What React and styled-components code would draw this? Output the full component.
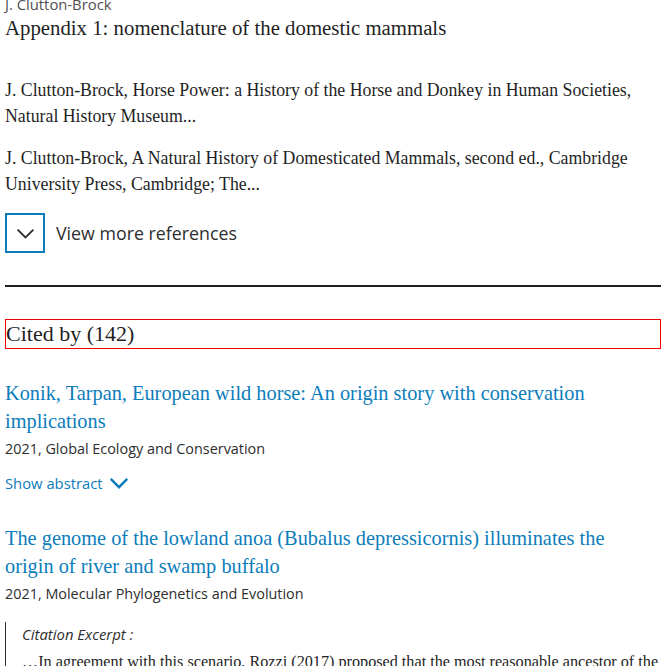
import React from 'react'
import styled, { createGlobalStyle } from 'styled-components'

const GlobalStyle = createGlobalStyle`
  body {
    margin: 0;
    background: #fff;
    overflow: hidden;
  }
`

const Page = styled.div`
  padding: 0 5px;
  margin-top: -6px;
  color: #2e2e2e;
`

const Author = styled.div`
  font-family: 'Open Sans', sans-serif;
  font-size: 14.8px;
  line-height: 20px;
  color: #505050;
`

const SourceTitle = styled.h3`
  font-family: 'Liberation Serif', serif;
  font-weight: normal;
  font-size: 20.8px;
  line-height: 28px;
  margin: 0 0 35px;
  color: #1f1f1f;
`

const RefList = styled.ul`
  list-style: none;
  margin: 0;
  padding: 0;
  display: flex;
  flex-direction: column;
  gap: 16px;
`

const RefItem = styled.li`
  font-family: 'Liberation Serif', serif;
  font-size: 17.8px;
  line-height: 26px;
  color: #1f1f1f;
`

const MoreRow = styled.div`
  display: flex;
  align-items: center;
  gap: 11px;
  margin-top: 16px;
`

const ToggleBox = styled.button`
  width: 40px;
  height: 40px;
  box-sizing: border-box;
  border: 2px solid #0c7dbb;
  background: #fff;
  display: flex;
  align-items: center;
  justify-content: center;
  padding: 0;
`

const MoreLabel = styled.span`
  font-family: 'Open Sans', sans-serif;
  font-size: 17.8px;
  color: #2e2e2e;
`

const Divider = styled.hr`
  border: 0;
  border-top: 2px solid #1f1f1f;
  margin: 32px 0 0;
`

const CitedHeading = styled.h2`
  font-family: 'Liberation Serif', serif;
  font-weight: normal;
  font-size: 22px;
  line-height: 28px;
  margin: 32px 0 0;
  border: 1px solid #e00;
  color: #1f1f1f;
`

const CitingList = styled.ul`
  list-style: none;
  margin: 30px 0 0;
  padding: 0;
  display: flex;
  flex-direction: column;
  gap: 30px;
`

const CitingItem = styled.li`
  display: flex;
  flex-direction: column;
`

const CitingTitle = styled.a`
  max-width: 640px;
  font-family: 'Liberation Serif', serif;
  font-size: 20.35px;
  line-height: 28px;
  color: #0c7dbb;
  text-decoration: none;
`

const Meta = styled.div`
  font-family: 'Open Sans', sans-serif;
  font-size: 14.4px;
  line-height: 24px;
  color: #2e2e2e;
  margin-top: 2px;
`

const AbstractToggle = styled.button`
  align-self: flex-start;
  display: flex;
  align-items: center;
  gap: 5px;
  margin-top: 11px;
  padding: 0;
  border: 0;
  background: none;
  font-family: 'Open Sans', sans-serif;
  font-size: 14.8px;
  color: #0c7dbb;
`

const Excerpt = styled.blockquote`
  margin: 16px 0 0;
  padding: 0 0 0 16px;
  border-left: 1px solid #2e2e2e;
`

const ExcerptLabel = styled.div`
  font-family: 'Open Sans', sans-serif;
  font-style: italic;
  font-size: 14.9px;
  line-height: 24px;
  color: #2e2e2e;
`

const ExcerptText = styled.p`
  font-family: 'Liberation Serif', serif;
  font-size: 16.2px;
  line-height: 26px;
  margin: 3px 0 0;
  color: #1f1f1f;
`

const Chevron = ({ size = 16, width = 1.6, color = '#2e2e2e' }) => (
  <svg width={size} height={size} viewBox="0 0 16 16" fill="none">
    <path d="M2 5l6 6 6-6" stroke={color} strokeWidth={width} />
  </svg>
)

const refs = [
  'J. Clutton-Brock, Horse Power: a History of the Horse and Donkey in Human Societies, Natural History Museum...',
  'J. Clutton-Brock, A Natural History of Domesticated Mammals, second ed., Cambridge University Press, Cambridge; The...',
]

export default function App() {
  return (
    <>
      <GlobalStyle />
      <Page>
        <Author>J. Clutton-Brock</Author>
        <SourceTitle>Appendix 1: nomenclature of the domestic mammals</SourceTitle>
        <RefList>
          {refs.map((r) => (
            <RefItem key={r}>{r}</RefItem>
          ))}
        </RefList>
        <MoreRow>
          <ToggleBox aria-label="View more references">
            <Chevron size={21} width={1.4} />
          </ToggleBox>
          <MoreLabel>View more references</MoreLabel>
        </MoreRow>
        <Divider />
        <CitedHeading>Cited by (142)</CitedHeading>
        <CitingList>
          <CitingItem>
            <CitingTitle href="#">
              Konik, Tarpan, European wild horse: An origin story with conservation implications
            </CitingTitle>
            <Meta>2021, Global Ecology and Conservation</Meta>
            <AbstractToggle>
              Show abstract <Chevron size={22} width={1.8} color="#0c7dbb" />
            </AbstractToggle>
          </CitingItem>
          <CitingItem>
            <CitingTitle href="#">
              The genome of the lowland anoa (Bubalus depressicornis) illuminates the origin of river and swamp buffalo
            </CitingTitle>
            <Meta>2021, Molecular Phylogenetics and Evolution</Meta>
            <Excerpt>
              <ExcerptLabel>Citation Excerpt :</ExcerptLabel>
              <ExcerptText>
                …In agreement with this scenario, Rozzi (2017) proposed that the most reasonable ancestor of the
              </ExcerptText>
            </Excerpt>
          </CitingItem>
        </CitingList>
      </Page>
    </>
  )
}
